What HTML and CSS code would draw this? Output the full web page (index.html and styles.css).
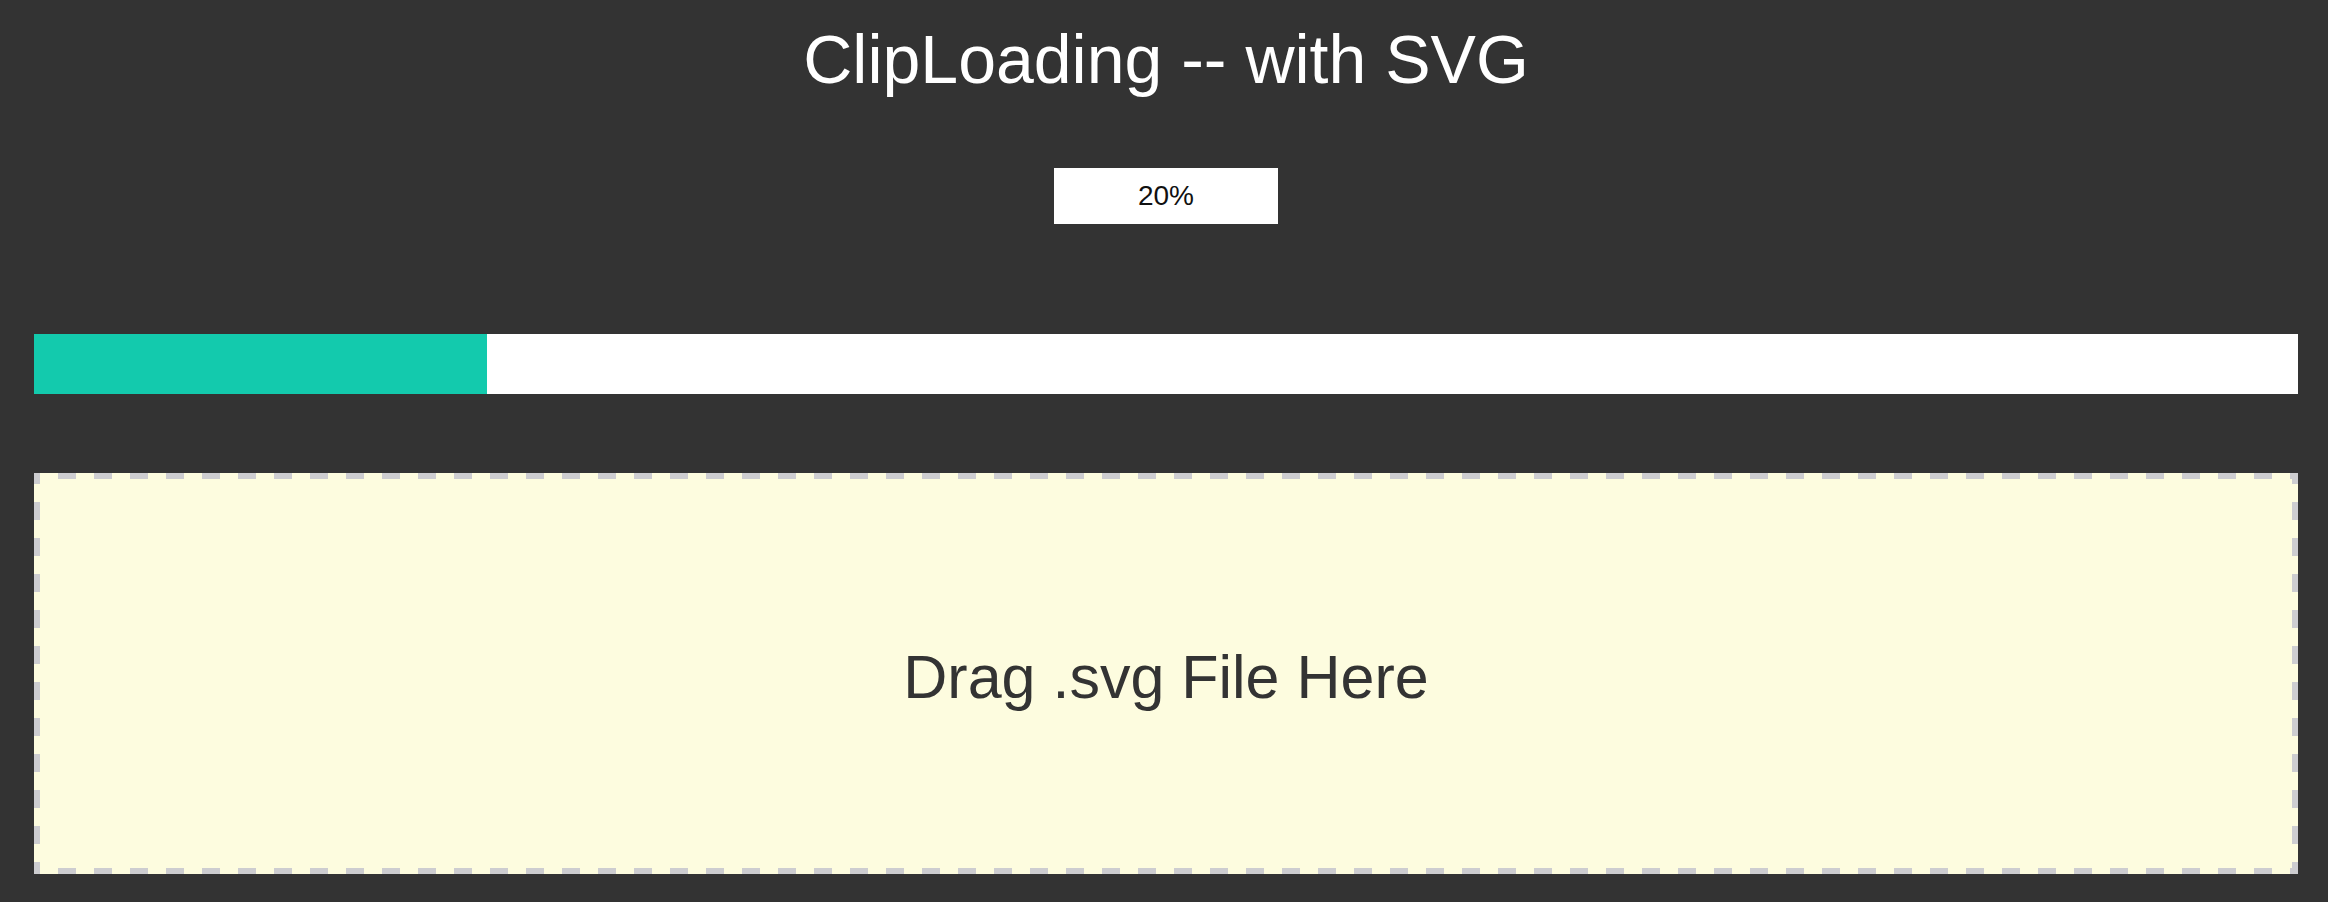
FILE: index.html
```html
<!DOCTYPE html>
<html lang="en">
<head>
<meta charset="utf-8">
<title>ClipLoading -- with SVG</title>
<link rel="stylesheet" href="styles.css">
</head>
<body>
  <h1 class="title">ClipLoading -- with SVG</h1>
  <div class="percent">20%</div>
  <div class="bar"><div class="bar-fill" style="width: 20%"></div></div>
  <div class="drop">Drag .svg File Here</div>
</body>
</html>
```

FILE: styles.css
```css
html, body {
  margin: 0;
  background: #333333;
}
body {
  padding: 0 30px 1px 34px;
  font-family: "Liberation Sans", Arial, sans-serif;
}
.title {
  margin: 20px 0 0;
  font-size: 68px;
  line-height: 78px;
  font-weight: normal;
  color: #ffffff;
  text-align: center;
}
.percent {
  width: 224px;
  height: 56px;
  margin: 70px auto 0;
  background: #ffffff;
  color: #111111;
  font-size: 28px;
  line-height: 56px;
  text-align: center;
}
.bar {
  margin-top: 110px;
  height: 60px;
  background: #ffffff;
}
.bar-fill {
  height: 100%;
  background: #13caad;
}
.drop {
  box-sizing: border-box;
  margin-top: 79px;
  height: 401px;
  padding-top: 6px;
  background-color: #fdfcdf;
  background-image:
    linear-gradient(90deg, #cdcdd0 0 18px, transparent 18px),
    linear-gradient(90deg, #cdcdd0 0 18px, transparent 18px),
    linear-gradient(180deg, #cdcdd0 0 18px, transparent 18px),
    linear-gradient(180deg, #cdcdd0 0 18px, transparent 18px);
  background-size: 36px 6px, 36px 6px, 6px 36px, 6px 36px;
  background-repeat: repeat-x, repeat-x, repeat-y, repeat-y;
  background-position: 24px 0, 24px 100%, 0 -7px, 100% -7px;
  color: #333333;
  font-size: 61px;
  display: flex;
  align-items: center;
  justify-content: center;
}
```
